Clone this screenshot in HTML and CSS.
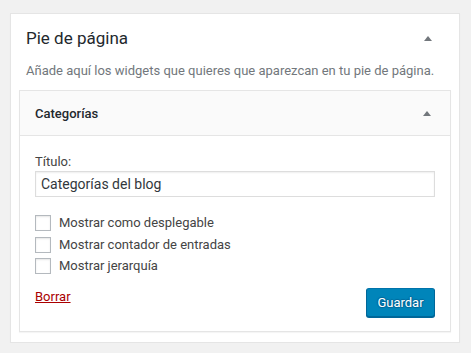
FILE: index.html
```html
<!DOCTYPE html>
<html lang="es">
<head>
<meta charset="utf-8">
<title>Pie de página</title>
<link rel="stylesheet" href="styles.css">
</head>
<body>
<div class="sidebar">
  <div class="sidebar-head">
    <h2 class="sidebar-title">Pie de página</h2>
    <span class="arrow"></span>
  </div>
  <p class="sidebar-desc">Añade aquí los widgets que quieres que aparezcan en tu pie de página.</p>
  <div class="widget">
    <div class="widget-top">
      <span class="widget-title">Categorías</span>
      <span class="arrow"></span>
    </div>
    <div class="widget-inside">
      <label class="field-label" for="title">Título:</label>
      <input class="text-input" id="title" type="text" value="Categorías del blog">
      <div class="checks">
        <label class="check"><span class="box"></span>Mostrar como desplegable</label>
        <label class="check"><span class="box"></span>Mostrar contador de entradas</label>
        <label class="check"><span class="box"></span>Mostrar jerarquía</label>
      </div>
      <div class="actions">
        <a class="delete" href="#">Borrar</a>
        <button class="save" type="button">Guardar</button>
      </div>
    </div>
  </div>
</div>
</body>
</html>
```
FILE: styles.css
```css
* { box-sizing: border-box; }
html, body { margin: 0; }
body {
  background: #f1f1f1;
  padding: 13px 11px 0 10px;
  font-family: Roboto, "Open Sans", sans-serif;
  font-size: 13px;
  color: #444;
}
.sidebar {
  width: 450px;
  background: #fff;
  border: 1px solid #e5e5e5;
  box-shadow: 0 1px 1px rgba(0,0,0,.04);
  padding: 0 8px 10px;
}
.sidebar-head {
  display: flex;
  align-items: center;
  justify-content: space-between;
  padding: 0 19px 0 7px;
  height: 48px;
}
.sidebar-title {
  margin: 0;
  font-size: 17px;
  font-weight: 400;
  color: #23282d;
  line-height: 20px;
}
.arrow {
  width: 0;
  height: 0;
  border-left: 4px solid transparent;
  border-right: 4px solid transparent;
  border-bottom: 5px solid #72777c;
}
.sidebar-desc {
  margin: 0 0 10px;
  padding: 0 7px;
  color: #72777c;
  line-height: 18px;
  white-space: nowrap;
}
.widget {
  border: 1px solid #e5e5e5;
  background: #fff;
  box-shadow: 0 1px 1px rgba(0,0,0,.04);
}
.widget-top {
  display: flex;
  align-items: center;
  justify-content: space-between;
  height: 45px;
  background: #fafafa;
  border-bottom: 1px solid #e5e5e5;
  padding: 0 19px 0 15px;
}
.widget-title {
  font-weight: 500;
  color: #23282d;
}
.widget-inside {
  padding: 17px 15px 14px;
  display: flex;
  flex-direction: column;
}
.field-label {
  line-height: 17px;
  color: #444;
}
.text-input {
  margin-top: 1px;
  width: 400px;
  height: 26px;
  border: 1px solid #ddd;
  box-shadow: inset 0 1px 2px rgba(0,0,0,.07);
  font-family: inherit;
  font-size: 14px;
  color: #32373c;
  padding: 0 5px;
}
.checks {
  margin-top: 18px;
  display: flex;
  flex-direction: column;
  gap: 5.5px;
}
.check {
  display: flex;
  align-items: center;
  height: 16px;
  line-height: 16px;
  color: #444;
}
.box {
  width: 16px;
  height: 16px;
  border: 1px solid #b4b9be;
  background: #fff;
  box-shadow: inset 0 1px 2px rgba(0,0,0,.1);
  margin-right: 8px;
  flex: none;
}
.actions {
  margin-top: 14px;
  display: flex;
  justify-content: space-between;
  align-items: flex-start;
}
.delete {
  color: #a00;
  text-decoration: underline;
  line-height: 18px;
}
.save {
  height: 29px;
  width: 69px;
  padding: 0;
  background: #0085ba;
  border: 1px solid #0073aa;
  border-color: #0073aa #006799 #006799;
  border-radius: 3px;
  box-shadow: 0 1px 0 #006799;
  color: #fff;
  font-family: inherit;
  font-size: 13px;
  text-shadow: 0 -1px 1px #006799, 1px 0 1px #006799, 0 1px 1px #006799, -1px 0 1px #006799;
}
```
